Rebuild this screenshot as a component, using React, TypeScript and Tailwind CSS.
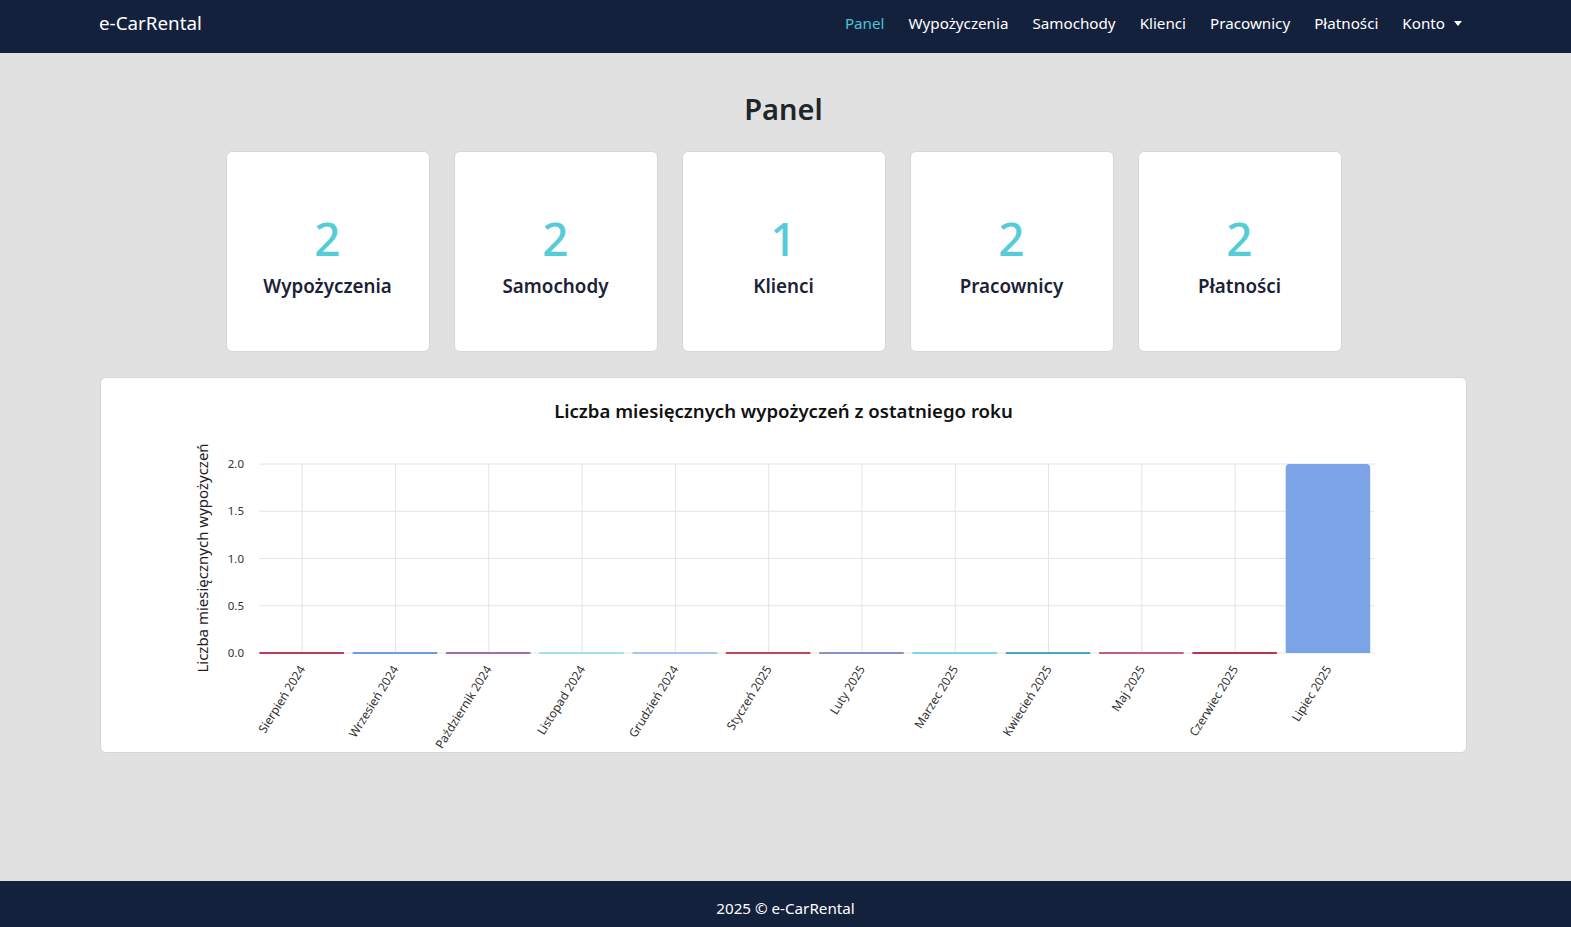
import React from 'react';

const font = { fontFamily: '"Noto Sans", "Open Sans", sans-serif' };

const navLinks = ['Panel', 'Wypożyczenia', 'Samochody', 'Klienci', 'Pracownicy', 'Płatności'];

const stats = [
  { value: 2, label: 'Wypożyczenia' },
  { value: 2, label: 'Samochody' },
  { value: 1, label: 'Klienci' },
  { value: 2, label: 'Pracownicy' },
  { value: 2, label: 'Płatności' },
];

const months = [
  { label: 'Sierpień 2024', value: 0, color: '#c0395a' },
  { label: 'Wrzesień 2024', value: 0, color: '#6f9be6' },
  { label: 'Październik 2024', value: 0, color: '#a46fa6' },
  { label: 'Listopad 2024', value: 0, color: '#9fdff0' },
  { label: 'Grudzień 2024', value: 0, color: '#a3c6ee' },
  { label: 'Styczeń 2025', value: 0, color: '#c0465c' },
  { label: 'Luty 2025', value: 0, color: '#8a8fc9' },
  { label: 'Marzec 2025', value: 0, color: '#7dd3ec' },
  { label: 'Kwiecień 2025', value: 0, color: '#47a6c6' },
  { label: 'Maj 2025', value: 0, color: '#c0607c' },
  { label: 'Czerwiec 2025', value: 0, color: '#c0304f' },
  { label: 'Lipiec 2025', value: 2, color: '#7ba3e5' },
];

// chart geometry, in card-local pixels
const left = 154;
const step = 93.3;
const top = 34;
const bottom = 223;
const right = left + step * 12;

const Chart = () => {
  const yTicks = [2, 1.5, 1, 0.5, 0];
  const y = (v: number) => bottom - (v / 2) * (bottom - top);
  return (
    <svg width="1365" height="330" className="block" style={font}>
      {/* horizontal grid */}
      {yTicks.map((t) => (
        <g key={t}>
          <line x1={left + 4} x2={right} y1={y(t)} y2={y(t)} stroke="#e4e4e4" strokeWidth="1" />
          <text x={143} y={y(t) + 4} textAnchor="end" fontSize="11.5" fill="#333">
            {t.toFixed(1)}
          </text>
        </g>
      ))}
      {/* vertical grid */}
      {months.slice(0, 11).map((_, i) => {
        const x = left + step * (i + 1) - step / 2 + 0.5;
        return <line key={i} x1={x} x2={x} y1={top} y2={bottom} stroke="#e4e4e4" strokeWidth="1" />;
      })}
      {/* bars */}
      {months.map((m, i) => {
        const cx = left + step * i + step / 2;
        const w = 84.5;
        if (m.value === 0) {
          return <rect key={i} x={cx - w / 2} y={bottom - 1} width={w} height={2} fill={m.color} />;
        }
        const r = 4;
        const x0 = cx - w / 2;
        const y0 = y(m.value);
        return (
          <path
            key={i}
            d={`M${x0},${bottom} L${x0},${y0 + r} Q${x0},${y0} ${x0 + r},${y0} L${x0 + w - r},${y0} Q${x0 + w},${y0} ${x0 + w},${y0 + r} L${x0 + w},${bottom} Z`}
            fill={m.color}
          />
        );
      })}
      {/* x labels */}
      {months.map((m, i) => {
        const cx = left + step * i + step / 2 + 4;
        return (
          <text
            key={i}
            x={cx}
            y={bottom + 16}
            textAnchor="end"
            fontSize="12"
            fill="#333"
            transform={`rotate(-58 ${cx} ${bottom + 16})`}
          >
            {m.label}
          </text>
        );
      })}
      {/* y axis title */}
      <text
        x={107}
        y={128}
        textAnchor="middle"
        fontSize="15"
        fill="#222"
        transform="rotate(-90 107 128)"
      >
        Liczba miesięcznych wypożyczeń
      </text>
    </svg>
  );
};

export default function App() {
  return (
    <div className="min-h-screen flex flex-col bg-[#e1e1e1]" style={font}>
      <nav className="h-[53px] bg-[#14213d] shrink-0">
        <div className="h-full pl-[99px] pr-[104px] pb-[6px] flex items-center justify-between">
          <span className="text-[18.8px] text-white">e-CarRental</span>
          <div className="flex items-center gap-6 text-[15.2px] text-white pr-[5px]">
            {navLinks.map((l, i) => (
              <a key={l} className={i === 0 ? 'text-[#4ac5d3]' : 'text-white'}>
                {l}
              </a>
            ))}
            <a className="flex items-center gap-[9px]">
              Konto
              <span className="inline-block w-0 h-0 border-l-[4px] border-r-[4px] border-t-[5px] border-l-transparent border-r-transparent border-t-white" />
            </a>
          </div>
        </div>
      </nav>

      <main className="flex-1 pl-[100px] pr-[104px] pt-[36px]">
        <h1 className="text-center text-[29px] leading-[40px] font-semibold text-[#212529]">Panel</h1>
        <div className="mt-[22px] flex justify-center gap-6">
          {stats.map((s) => (
            <div
              key={s.label}
              className="w-[204px] h-[201px] bg-white border border-[#d6d6d6] rounded-[6px] flex flex-col items-center justify-center pt-[4px]"
            >
              <div className="text-[46px] leading-[56px] font-medium text-[#54cdd9]">{s.value}</div>
              <div className="mt-[8px] text-[18.8px] leading-[24px] font-semibold text-[#1b2236]">{s.label}</div>
            </div>
          ))}
        </div>
        <div className="mt-[25px] bg-white border border-[#d6d6d6] rounded-[6px] h-[376px] overflow-hidden">
          <h2 className="pt-[20px] text-center text-[18.6px] leading-[26px] font-semibold text-[#111]">
            Liczba miesięcznych wypożyczeń z ostatniego roku
          </h2>
          <div className="mt-[6px]">
            <Chart />
          </div>
        </div>
      </main>

      <footer className="h-[46px] bg-[#14213d] shrink-0 flex items-center justify-center">
        <span className="text-[15.2px] text-white pt-[8px]">2025 © e-CarRental</span>
      </footer>
    </div>
  );
}
